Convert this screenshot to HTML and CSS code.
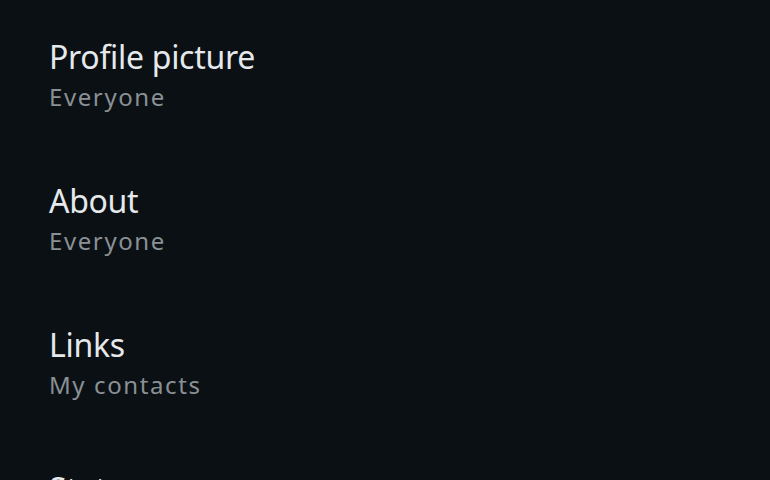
FILE: index.html
```html
<!DOCTYPE html>
<html lang="en">
<head>
  <meta charset="UTF-8">
  <title>Privacy</title>
  <link rel="stylesheet" href="styles.css">
</head>
<body>
  <ul class="settings-list">
    <li class="setting">
      <div class="setting-title">Profile picture</div>
      <div class="setting-value">Everyone</div>
    </li>
    <li class="setting">
      <div class="setting-title">About</div>
      <div class="setting-value">Everyone</div>
    </li>
    <li class="setting">
      <div class="setting-title">Links</div>
      <div class="setting-value">My contacts</div>
    </li>
    <li class="setting">
      <div class="setting-title">Status</div>
      <div class="setting-value">My contacts</div>
    </li>
  </ul>
</body>
</html>
```

FILE: styles.css
```css
html, body {
  margin: 0;
  padding: 0;
  background: #0b1014;
  height: 100%;
  overflow: hidden;
}

body {
  font-family: 'Noto Sans', sans-serif;
}

.settings-list {
  list-style: none;
  margin: 0;
  padding: 0;
}

.setting {
  height: 144px;
  padding: 35px 0 0 49px;
  box-sizing: border-box;
}

.setting-title {
  font-size: 32px;
  line-height: 44px;
  letter-spacing: -0.3px;
  color: #e6e9eb;
}

.setting-value {
  font-size: 24px;
  line-height: 35px;
  letter-spacing: 1.6px;
  color: #8a9094;
}
```
